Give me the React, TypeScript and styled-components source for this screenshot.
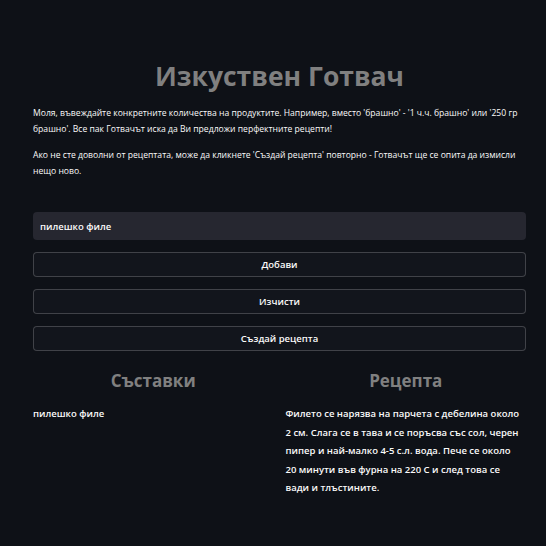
import styled, { createGlobalStyle } from "styled-components";

const GlobalStyle = createGlobalStyle`
  html, body {
    margin: 0;
    padding: 0;
    background: #0e1117;
  }
  body {
    font-family: "Open Sans", "Noto Sans", sans-serif;
    color: #fafafa;
  }
`;

const Page = styled.main`
  min-height: 546px;
  padding: 56px 20px 40px 33px;
  box-sizing: border-box;
`;

const Title = styled.h1`
  margin: 0 0 9px;
  text-align: center;
  font-size: 26.5px;
  font-weight: 700;
  color: #808080;
  line-height: 40px;
`;

const Note = styled.p`
  margin: 0 0 10px;
  font-size: 8.6px;
  line-height: 16px;
  color: #fafafa;
`;

const Form = styled.div`
  margin-top: 33px;
  display: flex;
  flex-direction: column;
  gap: 12px;
`;

const Input = styled.input`
  height: 28px;
  box-sizing: border-box;
  border: none;
  border-radius: 4px;
  background: #262730;
  color: #fafafa;
  font-family: inherit;
  font-size: 9.5px;
  font-weight: 600;
  padding: 0 7px;
  outline: none;
`;

const Button = styled.button`
  height: 25px;
  border: 1px solid rgba(250, 250, 250, 0.2);
  border-radius: 4px;
  background: #12151c;
  color: #fafafa;
  font-family: inherit;
  font-size: 9.5px;
  font-weight: 600;
`;

const Columns = styled.section`
  margin-top: 18px;
  display: grid;
  grid-template-columns: 1fr 1fr;
  gap: 12px;
`;

const ColTitle = styled.h2`
  margin: 0 0 12px;
  text-align: center;
  font-size: 17px;
  font-weight: 700;
  color: #808080;
  line-height: 24px;
`;

const Body = styled.p`
  margin: 0;
  padding-right: 5px;
  font-size: 9.5px;
  font-weight: 600;
  line-height: 18.5px;
`;

export default function App() {
  return (
    <Page>
      <GlobalStyle />
      <Title>Изкуствен Готвач</Title>
      <Note>
        Моля, въвеждайте конкретните количества на продуктите. Например, вместо
        'брашно' - '1 ч.ч. брашно' или '250 гр брашно'. Все пак Готвачът иска да
        Ви предложи перфектните рецепти!
      </Note>
      <Note>
        Ако не сте доволни от рецептата, може да кликнете 'Създай рецепта'
        повторно - Готвачът ще се опита да измисли нещо ново.
      </Note>
      <Form>
        <Input defaultValue="пилешко филе" />
        <Button>Добави</Button>
        <Button>Изчисти</Button>
        <Button>Създай рецепта</Button>
      </Form>
      <Columns>
        <div>
          <ColTitle>Съставки</ColTitle>
          <Body>пилешко филе</Body>
        </div>
        <div>
          <ColTitle>Рецепта</ColTitle>
          <Body>
            Филето се нарязва на парчета с дебелина около 2 см. Слага се в тава
            и се поръсва със сол, черен пипер и най-малко 4-5 с.л. вода. Пече се
            около 20 минути във фурна на 220 С и след това се вади и тлъстините.
          </Body>
        </div>
      </Columns>
    </Page>
  );
}
